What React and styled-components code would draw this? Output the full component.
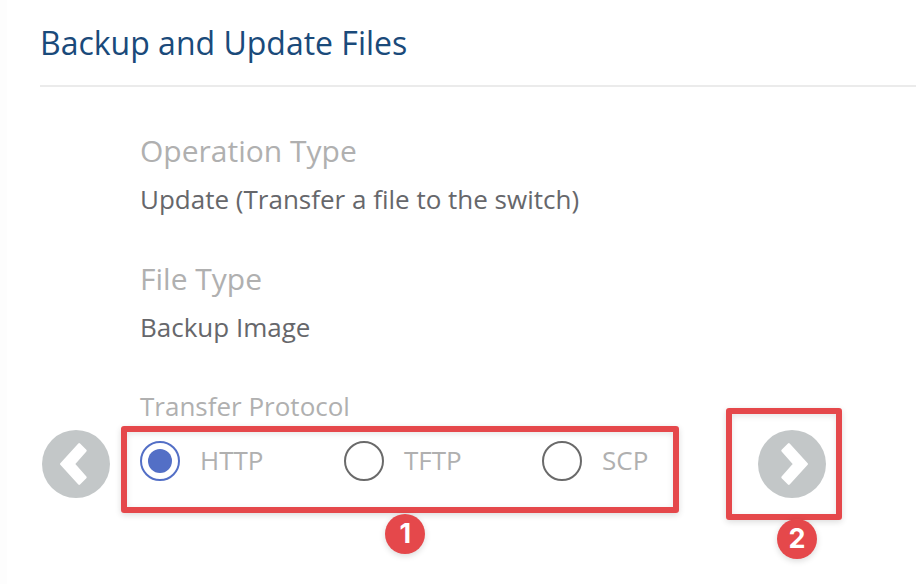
import React from "react";
import styled, { createGlobalStyle } from "styled-components";

const GlobalStyle = createGlobalStyle`
  *, *::before, *::after { box-sizing: border-box; }
  body {
    margin: 0;
    background: #fff;
    font-family: "Open Sans", "Noto Sans", sans-serif;
    overflow: hidden;
  }
`;

const Page = styled.main`
  height: 584px;
  padding-left: 33px;
  border-left: 7px solid #fdfdfd;
  overflow: hidden;
`;

const Header = styled.header`
  height: 87px;
  border-bottom: 2px solid #ebebeb;
`;

const Title = styled.h1`
  margin: 0;
  font-size: 32px;
  font-weight: 400;
  line-height: 85px;
  color: #1a4a7a;
  white-space: nowrap;
`;

const Fields = styled.dl`
  margin: 0;
  padding: 40px 0 0 100px;
`;

const Field = styled.div`
  height: 128px;
`;

const FieldLabel = styled.dt`
  font-size: 30px;
  line-height: 48px;
  color: #b0b0b0;
`;

const FieldValue = styled.dd`
  margin: 0;
  font-size: 26px;
  line-height: 48px;
  color: #66676b;
`;

const Wizard = styled.div`
  display: flex;
  align-items: flex-start;
  padding-left: 2px;
`;

const NavSlot = styled.div`
  position: relative;
  width: 68px;
  height: 68px;
  margin-top: 47px;
`;

const RoundButton = styled.button`
  display: block;
  width: 68px;
  height: 68px;
  padding: 0;
  border: 0;
  border-radius: 50%;
  background: #c3c7c8;
`;

const Protocol = styled.section`
  width: 648px;
  padding-left: 30px;
`;

const ProtocolTitle = styled.div`
  font-size: 26px;
  line-height: 46px;
  color: #b0b0b0;
`;

const Options = styled.div`
  position: relative;
  display: flex;
  height: 40px;
  margin-top: 12px;
`;

const Option = styled.label`
  display: flex;
  align-items: center;
  width: ${(p) => p.$width}px;
  gap: 20px;
`;

const Radio = styled.span`
  display: flex;
  align-items: center;
  justify-content: center;
  width: 40px;
  height: 40px;
  border: 2px solid ${(p) => (p.$checked ? "#536fc6" : "#6a6a6a")};
  border-radius: 50%;

  &::after {
    content: "";
    width: 24px;
    height: 24px;
    border-radius: 50%;
    background: ${(p) => (p.$checked ? "#536fc6" : "transparent")};
  }
`;

const OptionText = styled.span`
  font-size: 26px;
  line-height: 38px;
  padding-bottom: 2px;
  color: #b0b0b0;
`;

const Highlight = styled.div`
  position: absolute;
  left: ${(p) => p.$x}px;
  top: ${(p) => p.$y}px;
  width: ${(p) => p.$w}px;
  height: ${(p) => p.$h}px;
  border: 6px solid #e5484b;
  border-radius: 3px;
  box-shadow: 0 2px 6px rgba(0, 0, 0, 0.14), inset 0 2px 6px rgba(0, 0, 0, 0.1);
  pointer-events: none;
`;

const Badge = styled.span`
  position: absolute;
  left: ${(p) => p.$x}px;
  top: ${(p) => p.$y}px;
  width: 40px;
  height: 40px;
  border-radius: 50%;
  background: #e5484b;
  color: #fff;
  font: 700 27px/39px Inter, sans-serif;
  text-align: center;
  box-shadow: 0 2px 6px rgba(0, 0, 0, 0.15);
`;

const Chevron = ({ flip }) => (
  <svg width="68" height="68" viewBox="0 0 68 68" aria-hidden="true">
    <path
      transform={flip ? "translate(68 0) scale(-1 1)" : undefined}
      d="M19.2 34 37.2 14.3 43.5 20.6 31.8 34 43.5 47.4 37.2 53.7Z"
      fill="#fff"
      stroke="#fff"
      strokeWidth="2.4"
      strokeLinejoin="round"
    />
  </svg>
);

const fields = [
  { label: "Operation Type", value: "Update (Transfer a file to the switch)" },
  { label: "File Type", value: "Backup Image" },
];

const protocols = [
  { name: "HTTP", width: 204, checked: true },
  { name: "TFTP", width: 198 },
  { name: "SCP", width: 120 },
];

export default function App() {
  return (
    <Page>
      <GlobalStyle />
      <Header>
        <Title>Backup and Update Files</Title>
      </Header>
      <Fields>
        {fields.map((f) => (
          <Field key={f.label}>
            <FieldLabel>{f.label}</FieldLabel>
            <FieldValue>{f.value}</FieldValue>
          </Field>
        ))}
      </Fields>
      <Wizard>
        <NavSlot>
          <RoundButton aria-label="Previous">
            <Chevron />
          </RoundButton>
        </NavSlot>
        <Protocol>
          <ProtocolTitle>Transfer Protocol</ProtocolTitle>
          <Options>
            {protocols.map((p) => (
              <Option key={p.name} $width={p.width}>
                <Radio $checked={p.checked} />
                <OptionText>{p.name}</OptionText>
              </Option>
            ))}
            <Highlight $x={-19} $y={-15} $w={558} $h={87} />
            <Badge $x={245.4} $y={73}>1</Badge>
          </Options>
        </Protocol>
        <NavSlot>
          <RoundButton aria-label="Next">
            <Chevron flip />
          </RoundButton>
          <Highlight $x={-32} $y={-22} $w={116} $h={112} />
          <Badge $x={19} $y={89.4}>2</Badge>
        </NavSlot>
      </Wizard>
    </Page>
  );
}
